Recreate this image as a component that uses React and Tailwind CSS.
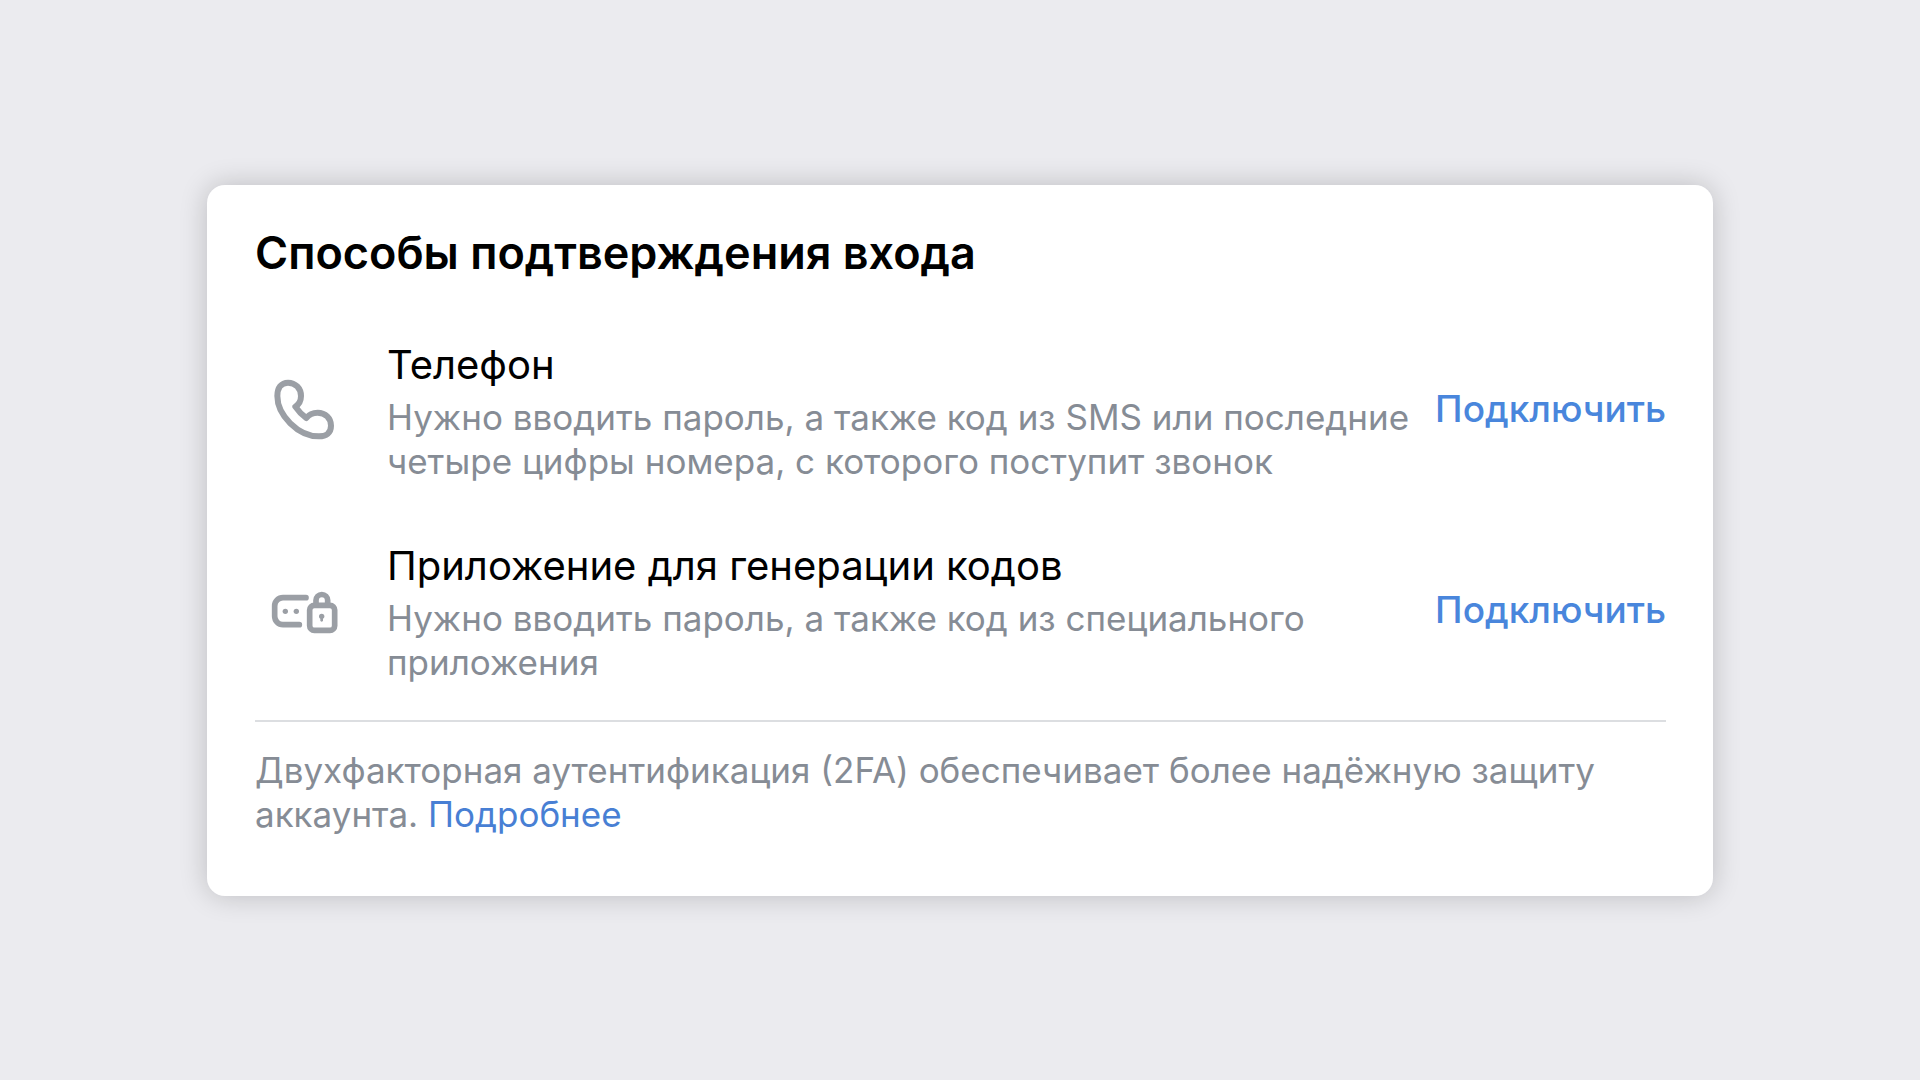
import React from 'react';

function PhoneIcon() {
  return (
    <svg viewBox="15 0 288 288" className="size-24" fill="none" stroke="currentColor" strokeWidth="18" strokeLinejoin="round" aria-hidden="true">
      <path d="M82 105C82 80 94 65 114 65C136 65 153 82 153 105C153 121 147 130 136 137C144 149 156 162 169 171C177 160 188 155 203 155C226 155 243 172 243 194C243 215 229 226 207 226C144 226 82 162 82 105Z" />
    </svg>
  );
}

function CodeLockIcon() {
  return (
    <svg viewBox="15 -30 288 288" className="size-24" fill="none" stroke="currentColor" strokeWidth="17" strokeLinecap="round" aria-hidden="true">
      <path d="M168 77H99a25 25 0 0 0-25 25v31a25 25 0 0 0 25 25h49" />
      <rect x="179" y="100" width="75" height="75" rx="14" />
      <path d="M198 98V85a17 17 0 0 1 35 0v13" />
      <g fill="currentColor" stroke="none">
        <circle cx="106" cy="118" r="8" />
        <circle cx="139" cy="118" r="8" />
        <circle cx="215" cy="133" r="8" />
        <rect x="211" y="134" width="8" height="15" rx="4" />
      </g>
    </svg>
  );
}

const METHODS = [
  {
    id: 'phone',
    icon: PhoneIcon,
    title: 'Телефон',
    text: 'Нужно вводить пароль, а также код из SMS или последние четыре цифры номера, с которого поступит звонок',
  },
  {
    id: 'app',
    icon: CodeLockIcon,
    title: 'Приложение для генерации кодов',
    text: 'Нужно вводить пароль, а также код из специального приложения',
  },
];

function MethodRow({ icon: Icon, title, text }) {
  return (
    <li className="flex items-start">
      <div className="flex h-34 shrink-0 items-center text-[#9b9fa5]">
        <Icon />
      </div>
      <div className="ml-9 min-w-0 flex-1 space-y-1.5">
        <h2 className="text-[40px] leading-12 text-black">{title}</h2>
        <p className="text-[35px] leading-11 text-[#868c95]">{text}</p>
      </div>
      <button type="button" className="ml-5 h-34 shrink-0 cursor-pointer text-[37px] font-medium text-[#4986dc]">
        Подключить
      </button>
    </li>
  );
}

export default function App() {
  return (
    <main className="flex min-h-screen items-center justify-center bg-[#ebebef] px-8 font-['Inter',sans-serif]">
      <section className="w-full max-w-[1506px] rounded-[18px] bg-white pt-10 pr-[47px] pb-15 pl-12 shadow-[0_0_28px_rgba(0,0,0,0.2)]">
        <h1 className="text-[45px] leading-14 font-semibold text-black">Способы подтверждения входа</h1>

        <ul className="mt-15 space-y-[59px]">
          {METHODS.map(({ id, ...method }) => (
            <MethodRow key={id} {...method} />
          ))}
        </ul>

        <p className="mt-9 border-t-2 border-[#dcdee1] pt-6.5 text-[35px] leading-11 text-[#868c95]">
          Двухфакторная аутентификация (2FA) обеспечивает более надёжную защиту аккаунта.{' '}
          <a href="#2fa" className="text-[#487fd4]">Подробнее</a>
        </p>
      </section>
    </main>
  );
}
